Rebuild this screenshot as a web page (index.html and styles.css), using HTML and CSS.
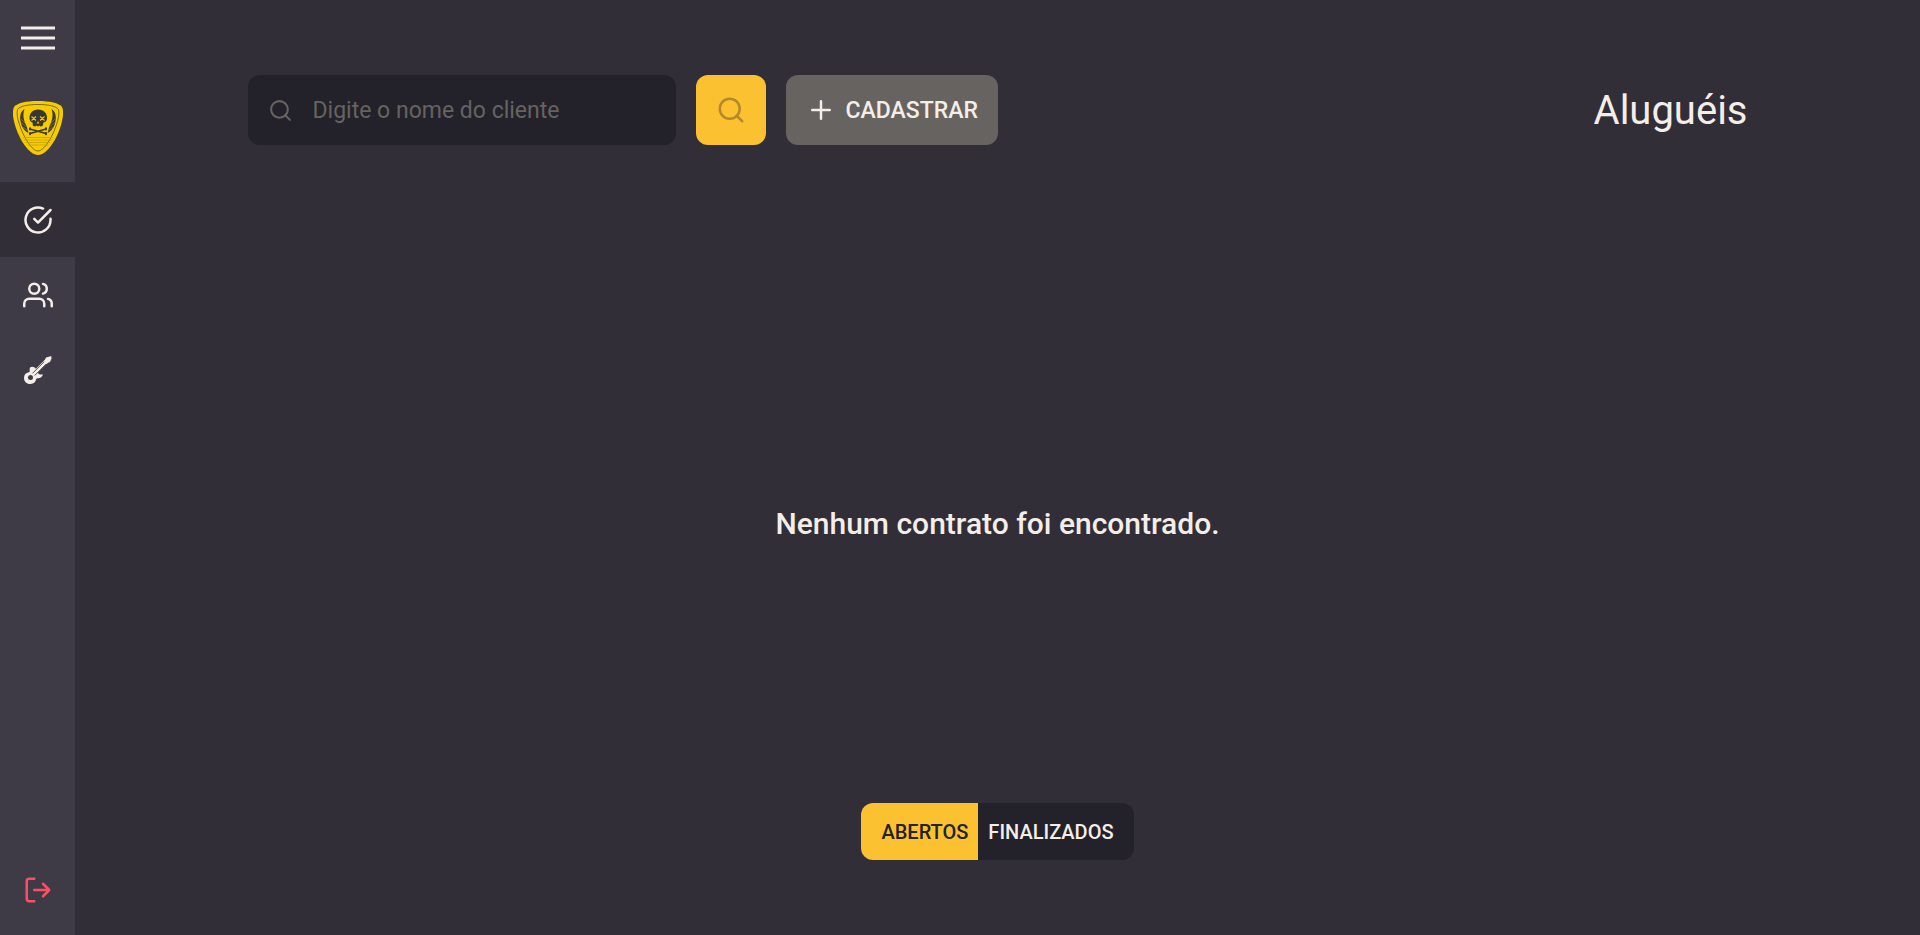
FILE: index.html
```html
<!DOCTYPE html>
<html lang="pt-BR">
<head>
<meta charset="utf-8">
<title>Aluguéis</title>
<link rel="stylesheet" href="styles.css">
</head>
<body>
<div class="app">
  <aside class="sidebar">
    <button class="side-item" type="button" aria-label="Menu">
      <svg class="icon-menu" viewBox="0 0 34 34"><path d="M0 7h34M0 17h34M0 27h34"/></svg>
    </button>
    <a class="brand" href="#" aria-label="Início">
      <svg class="logo" viewBox="0 0 50 54">
        <path fill="#f6cc00" d="M25 0C37 0 46 2 49 6c2 4 1 11-1 18C44 38 34 54 25 54S6 38 2 24C0 17-1 10 1 6 4 2 13 0 25 0z"/>
        <path fill="none" stroke="#5c5124" stroke-width=".8" d="M25 3.500C35 3.500 43 5 45.500 8.500c1 4 0 9.500-2 15C39.500 36 31 50 25 50S10.500 36 6.500 23.500c-2-5.500-3-11-2-15C7 5 15 3.500 25 3.500z"/>
        <path fill="#3e3b38" d="M11.500 8C7.500 10 6.500 16 7.500 20c1 6 4 10 8 12-1-2-1-5-2-7-3-6-4-11-2-17zM38.500 8c4 2 5 8 4 12-1 6-4 10-8 12 1-2 1-5 2-7 3-6 4-11 2-17z"/>
        <path fill="none" stroke="#b39510" stroke-width=".5" d="M8 18l5 5M8 21.500l6 4.500M9.500 26l5 3M42 18l-5 5M42 21.500l-6 4.500M40.500 26l-5 3"/>
        <path fill="#3a3730" d="M25 8.500c6 0 9 4 9 8.500 0 2.500-1 4-3.500 4.500l-1 3.500-2 .5-1-1-1.500 1-1.500-1-1.500 1-2-.5-.5-3.500C17.500 21 16.500 19.500 16.500 17c0-4.500 3-8.500 8.500-8.500z"/>
        <path fill="none" stroke="#f6cc00" stroke-width="1.100" d="M18.500 15.500l4.500 4M23 15.500l-4.500 4M27 15.500l4.500 4M31.500 15.500l-4.500 4"/>
        <path fill="#f6cc00" d="M25 20l1.300 2.500h-2.600z"/>
        <path fill="none" stroke="#3a3730" stroke-width="1.500" d="M17 28l16 4.500M33 28l-16 4.500"/>
        <path fill="none" stroke="#3a3730" stroke-width="2" stroke-linecap="round" d="M17 27.300v1.200M33 27.300v1.200M17 32v1.200M33 32v1.200"/>
        <path fill="none" stroke="#c9a606" stroke-width=".9" d="M10 36.500h30M11 39h28M12.500 41.500h25M14.500 44h21"/>
      </svg>
    </a>
    <nav class="nav">
      <a class="side-item active" href="#" aria-label="Aluguéis">
        <svg class="icon" viewBox="0 0 24 24"><path d="M22 11.080V12a10 10 0 1 1-5.930-9.140"/><path d="M22 4 12 14.010l-3-3"/></svg>
      </a>
      <a class="side-item" href="#" aria-label="Clientes">
        <svg class="icon" viewBox="0 0 24 24"><path d="M17 21v-2a4 4 0 0 0-4-4H5a4 4 0 0 0-4 4v2"/><circle cx="9" cy="7" r="4"/><path d="M23 21v-2a4 4 0 0 0-3-3.870M16 3.130a4 4 0 0 1 0 7.750"/></svg>
      </a>
      <a class="side-item" href="#" aria-label="Instrumentos">
        <svg class="icon-guitar" viewBox="0 0 28 28">
          <path fill="currentColor" fill-rule="evenodd" d="M6 11.500c2-1.300 4.500-.6 6 1.500l2.500 4.800c1 1 2.500.7 4.500.7-.8 2.500-2.800 4-5.500 3.800-1 .2-1.500 1-1.700 2-.7 2.500-3 3.700-5.800 3.700-3.500 0-6-2.500-6-6 0-3 1.500-5 4-5.500 1.500-.3 2-.8 1.700-2-.2-1 0-2.200.3-3zM6.500 19a2.500 2.500 0 1 0 0 5 2.500 2.500 0 0 0 0-5z"/>
          <path fill="none" stroke="currentColor" stroke-width="4" d="M10 17.500 22 5.500"/>
          <path fill="none" stroke="#3e3b47" stroke-width=".9" d="M8.500 17.300 20.800 5M10.700 19.500 23 7.200"/>
          <path fill="currentColor" d="M20 5.500 22 1.500 27.500 0l-.4 1.500.9.500-1.200 1.200.7.800-1.500 1 .4 1-1.900.5-2 1.500z"/>
        </svg>
      </a>
    </nav>
    <button class="side-item logout" type="button" aria-label="Sair">
      <svg class="icon" viewBox="0 0 24 24"><path d="M9 21H5a2 2 0 0 1-2-2V5a2 2 0 0 1 2-2h4M16 17l5-5-5-5M21 12H9"/></svg>
    </button>
  </aside>
  <main class="main">
    <header class="header">
      <form class="search">
        <label class="field">
          <svg class="icon-field" viewBox="0 0 24 24"><circle cx="11" cy="11" r="8"/><path d="m21 21-4.350-4.350"/></svg>
          <input class="input" type="text" placeholder="Digite o nome do cliente" aria-label="Nome do cliente">
        </label>
        <button class="btn-search" type="submit" aria-label="Buscar">
          <svg class="icon" viewBox="0 0 24 24"><circle cx="11" cy="11" r="8"/><path d="m21 21-4.350-4.350"/></svg>
        </button>
        <button class="btn-add" type="button">
          <svg class="icon" viewBox="0 0 24 24"><path d="M12 5v14M5 12h14"/></svg>
          CADASTRAR
        </button>
      </form>
      <h1 class="title">Aluguéis</h1>
    </header>
    <section class="content">
      <p class="empty">Nenhum contrato foi encontrado.</p>
    </section>
    <footer class="footer">
      <div class="tabs">
        <button class="tab tab-open" type="button">ABERTOS</button>
        <button class="tab tab-done" type="button">FINALIZADOS</button>
      </div>
    </footer>
  </main>
</div>
</body>
</html>
```

FILE: styles.css
```css
* {
  margin: 0;
  padding: 0;
  box-sizing: border-box;
}

body {
  background: #312e38;
  color: #f4ede8;
  font-family: Roboto, sans-serif;
}

button,
input {
  border: 0;
  font: inherit;
  color: inherit;
  background: none;
}

button {
  cursor: pointer;
}

svg {
  display: block;
  flex-shrink: 0;
  fill: none;
  stroke: currentColor;
  stroke-width: 2;
  stroke-linecap: round;
  stroke-linejoin: round;
}

.app {
  display: flex;
  min-height: 100vh;
}

.sidebar {
  display: flex;
  flex-direction: column;
  flex-shrink: 0;
  width: 75px;
  padding-bottom: 8px;
  background: #3e3b47;
}

.side-item {
  display: flex;
  align-items: center;
  justify-content: center;
  width: 100%;
  height: 75px;
  color: #f4ede8;
}

.active {
  background: #312e38;
}

.logout {
  margin-top: auto;
  color: #ff4d67;
}

.icon {
  width: 30px;
  height: 30px;
}

.icon-menu {
  width: 34px;
  height: 34px;
  stroke-width: 3;
}

.icon-guitar {
  width: 28px;
  height: 28px;
  stroke: none;
  stroke-linecap: butt;
}

.brand {
  display: flex;
  justify-content: center;
  padding: 26px 0 27px;
}

.logo {
  width: 50px;
  height: 54px;
  stroke: none;
  stroke-linecap: butt;
}

.main {
  display: flex;
  flex: 1;
  flex-direction: column;
  width: 100%;
  max-width: 1500px;
  margin: 0 auto;
  padding: 75px 0;
}

.header,
.search {
  display: flex;
  align-items: center;
}

.header {
  justify-content: space-between;
  margin-bottom: 98px;
}

.search {
  gap: 20px;
}

.field {
  display: flex;
  align-items: center;
  gap: 20px;
  width: 428px;
  height: 70px;
  padding: 0 20px;
  border-radius: 12px;
  background: #232129;
  color: #666360;
}

.icon-field {
  width: 25px;
  height: 25px;
}

.input {
  flex: 1;
  min-width: 0;
  outline: 0;
  color: #f4ede8;
  font-size: 23px;
}

.input::placeholder {
  color: #666360;
}

.btn-search,
.btn-add {
  display: flex;
  align-items: center;
  justify-content: center;
  height: 70px;
  border-radius: 12px;
}

.btn-search {
  width: 70px;
  background: #fcc131;
  color: #b38a28;
}

.btn-add {
  gap: 10px;
  padding: 0 20px;
  background: #666360;
  font-size: 23px;
  font-weight: 500;
}

.title {
  font-size: 40px;
  font-weight: 400;
}

.content {
  display: flex;
  flex: 1;
  align-items: center;
  justify-content: center;
}

.empty {
  font-size: 30px;
  font-weight: 500;
}

.footer {
  display: flex;
  justify-content: center;
}

.tabs {
  display: flex;
  overflow: hidden;
  height: 57px;
  border-radius: 12px;
  background: #232129;
  font-size: 20px;
  font-weight: 500;
}

.tab-open {
  padding: 0 10px 0 20px;
  background: #fcc131;
  color: #232129;
}

.tab-done {
  padding: 0 20px 0 10px;
}
```
